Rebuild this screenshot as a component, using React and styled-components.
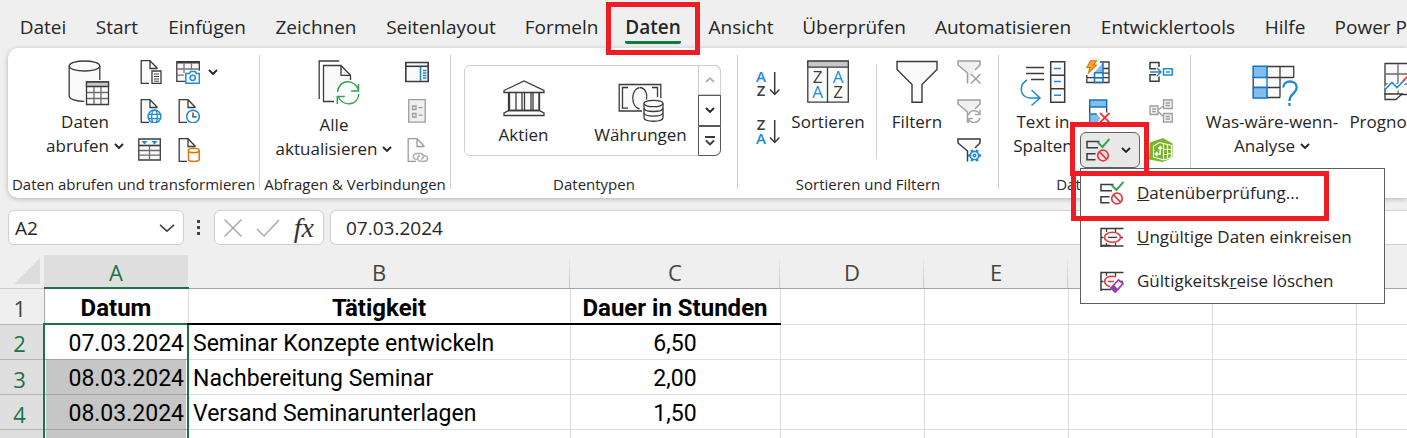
import React from "react";
import styled, { createGlobalStyle, css } from "styled-components";

const ui = `"Open Sans", "Noto Sans", sans-serif`;
const sheet = `Roboto, "Liberation Sans", sans-serif`;

const INK = "#3b3b3b";
const PALE = "#fafafa";
const BLUE = "#1e8bd4";
const GREEN = "#36a151";
const RED = "#e8383d";
const GREY = "#9d9d9d";
const ORANGE = "#e07408";

const GlobalStyle = createGlobalStyle`
  *, *::before, *::after {
    box-sizing: border-box;
  }
  body {
    margin: 0;
    background: #efefef;
    font-family: ${ui};
    color: #262626;
  }
  button {
    margin: 0;
    padding: 0;
    border: 0;
    background: none;
    font: inherit;
    color: inherit;
  }
`;

const Window = styled.div`
  display: flex;
  flex-direction: column;
  height: 100vh;
  overflow: hidden;
`;

/* tabs */

const TabBar = styled.nav`
  display: flex;
  flex: none;
  height: 48px;
  padding-left: 5px;
`;

const Tab = styled.button`
  position: relative;
  display: flex;
  flex: none;
  justify-content: center;
  width: ${(props) => props.$width}px;
  padding-top: 12px;
  font-size: 19px;
  line-height: 30px;
  white-space: nowrap;
  font-weight: ${(props) => (props.$active ? 600 : 400)};
`;

const TabText = styled.span`
  height: 32px;
  border-bottom: 3px solid ${(props) => (props.$active ? "#107c41" : "transparent")};
  border-radius: 2px;
`;

const Marker = styled.span`
  position: absolute;
  z-index: 5;
  top: ${(props) => props.$top}px;
  left: ${(props) => props.$left}px;
  width: ${(props) => props.$width}px;
  height: ${(props) => props.$height}px;
  border: 5px solid #ee1c24;
  pointer-events: none;
`;

/* ribbon */

const Ribbon = styled.section`
  display: flex;
  flex: none;
  min-height: 150px;
  margin-left: 8px;
  background: #fff;
  border-radius: 10px 0 0 10px;
  box-shadow: 0 1px 5px rgba(0, 0, 0, 0.25);
`;

const Separator = styled.div`
  flex: none;
  width: 1px;
  margin: ${(props) => (props.$inner ? "10px 0 15px" : "7px 0 9px")};
  background: #d0d0d0;
`;

const Group = styled.div`
  display: flex;
  flex-direction: column;
  flex: ${(props) => (props.$width ? "none" : "1")};
  width: ${(props) => (props.$width ? `${props.$width}px` : "auto")};
  min-width: 0;
  padding-top: 6px;
`;

const GroupBody = styled.div`
  display: flex;
  min-height: 120px;
  gap: ${(props) => props.$gap}px;
  padding-left: ${(props) => props.$indent}px;
`;

const GroupLabel = styled.div`
  font-size: 15px;
  line-height: 20px;
  text-align: center;
  white-space: nowrap;
`;

const BigButton = styled.button`
  flex: none;
  display: flex;
  flex-direction: column;
  align-items: center;
  align-self: flex-start;
  width: ${(props) => props.$width}px;
  padding-top: 6px;
  font-size: 17px;
  line-height: 24px;
  white-space: nowrap;
`;

const IconSlot = styled.span`
  display: flex;
  align-items: flex-start;
  height: ${(props) => props.$height || 50}px;
`;

const WithArrow = styled.span`
  display: flex;
  align-items: center;
  gap: 5px;
`;

const IconColumn = styled.div`
  flex: none;
  display: flex;
  flex-direction: column;
  align-items: flex-start;
  gap: 3px;
  padding-left: ${(props) => props.$indent || 0}px;
`;

const IconButton = styled.button`
  display: flex;
  align-items: center;
  gap: 8px;
  height: 36px;
`;

const SortColumn = styled.div`
  display: flex;
  flex-direction: column;
  gap: 12px;
  padding-top: 12px;
`;

const Glyph = styled.svg`
  display: block;
  flex: none;
  fill: none;
  stroke: ${INK};
  stroke-width: 1.3;
`;

/* data type gallery */

const Gallery = styled.div`
  display: flex;
  align-self: flex-start;
  height: 91px;
  margin-top: 11px;
  border: 1px solid #cfcfcf;
  border-radius: 6px;
`;

const GalleryItem = styled.button`
  display: flex;
  flex-direction: column;
  align-items: center;
  width: 117px;
  padding-top: 14px;
  font-size: 17px;
  line-height: 24px;
`;

const GallerySlot = styled.span`
  display: flex;
  height: 43px;
`;

const Scroller = styled.div`
  display: flex;
  flex-direction: column;
  width: 23px;
  margin: -1px;
`;

const ScrollButton = styled.button`
  display: flex;
  flex: 1;
  align-items: center;
  justify-content: center;
  border: 1px solid ${(props) => (props.disabled ? "#cfcfcf" : "#5a5a5a")};
  &:first-child {
    border-radius: 0 6px 0 0;
  }
  &:last-child {
    border-radius: 0 0 6px 0;
  }
`;

/* data validation split button and its menu */

const ValidationColumn = styled(IconColumn)`
  width: 60px;
  margin-left: -6px;
  margin-right: -3px;
`;

const Inset = styled.div`
  padding-left: 6px;
`;

const SplitButton = styled.div`
  position: relative;
  z-index: 3;
  width: 60px;
`;

const SplitFace = styled.button`
  display: flex;
  align-items: center;
  gap: 11px;
  width: 100%;
  height: 36px;
  padding-left: 5px;
  background: #e8e8e8;
  border: 1px solid #616161;
  border-radius: 6px;
`;

const Menu = styled.div`
  position: absolute;
  top: 36px;
  left: 0;
  width: 305px;
  padding: 2px 0 0;
  background: #fff;
  border: 1px solid #5c5f5c;
`;

const MenuItem = styled.button`
  position: relative;
  display: flex;
  align-items: center;
  gap: 13px;
  width: 100%;
  height: 44px;
  padding-left: 19px;
  font-size: 17px;
  line-height: 24px;
  white-space: nowrap;
`;

/* formula bar */

const box = css`
  background: #fff;
  border: 1px solid #cfcfcf;
  border-radius: 6px;
`;

const FormulaBar = styled.div`
  display: flex;
  flex: none;
  align-items: center;
  height: 35px;
  margin: 12px 0 10px 8px;
`;

const NameBox = styled.div`
  ${box}
  display: flex;
  align-items: center;
  width: 176px;
  height: 100%;
  padding-right: 8px;
`;

const NameInput = styled.input`
  flex: 1;
  min-width: 0;
  padding: 0 6px;
  border: 0;
  outline: 0;
  background: none;
  font-family: ${ui};
  font-size: 19px;
  color: #262626;
`;

const Dots = styled.span`
  display: flex;
  justify-content: center;
  width: 30px;
`;

const EntryButtons = styled.div`
  ${box}
  display: flex;
  align-items: center;
  width: 110px;
  height: 100%;
  padding: 0 8px;
  justify-content: space-between;
`;

const FxButton = styled.button`
  padding-right: 1px;
  font: italic 28px/30px "Liberation Serif", serif;
  color: #333;
`;

const FormulaInput = styled.input`
  ${box}
  flex: 1;
  min-width: 0;
  height: 100%;
  margin-left: 6px;
  padding: 0 15px;
  border-right: 0;
  border-radius: 6px 0 0 6px;
  font-family: ${ui};
  font-size: 19px;
  color: #262626;
  outline: 0;
`;

/* grid */

const SheetArea = styled.div`
  flex: 1;
  min-height: 0;
  overflow: hidden;
`;

const Grid = styled.table`
  width: 1644px;
  table-layout: fixed;
  border-collapse: collapse;
  font-family: ${sheet};
  font-size: 23px;
  line-height: 30px;
  color: #000;
`;

const ColHead = styled.th`
  height: 33px;
  padding: 2px 0 0;
  font-family: ${ui};
  font-size: 22px;
  font-weight: 400;
  color: ${(props) => (props.$selected ? "#1d7346" : "#444")};
  background: ${(props) =>
    props.$selected ? "#dfdfdf" : "linear-gradient(#efefef, #c4c4c4) right / 1px 100% no-repeat #efefef"};
  border-bottom: ${(props) => (props.$selected ? "2px solid #1d7346" : "1px solid #a6a6a6")};
`;

const Corner = styled.td`
  padding: 0 3px 0 0;
  border-bottom: 1px solid #c9c9c9;
`;

const RowHead = styled.th`
  height: ${(props) => (props.$selected ? 35 : 36)}px;
  padding: 3px 4px 0 0;
  font-family: ${ui};
  font-size: 22px;
  font-weight: 400;
  color: ${(props) => (props.$selected ? "#1d7346" : "#444")};
  background: ${(props) => (props.$selected ? "#dfdfdf" : "#efefef")};
  border-bottom: 1px solid #b5b5b5;
  border-right: 1px solid #a6a6a6;
`;

const Cell = styled.td`
  padding: ${(props) => (props.$align === "right" ? "4px 3px 0" : "4px 4px 0")};
  background: #fff;
  border-right: 1px solid #dcdcdc;
  border-bottom: 1px solid #dcdcdc;
  text-align: ${(props) => props.$align || "left"};
  white-space: nowrap;
  ${(props) =>
    props.$heading &&
    css`
      font-weight: 700;
      font-size: 24px;
      text-align: center;
    `}
  ${(props) =>
    props.$ruled &&
    css`
      border-bottom: 2px solid #000;
    `}
  ${(props) =>
    props.$picked &&
    css`
      background: ${props.$active ? "#fff" : "#c6c6c6"};
      border-left: 2px solid #1d7346;
      border-right: 2px solid #1d7346;
      border-bottom-color: #a3a3a3;
      box-shadow: inset 1px 0 #fff, inset -1px 0 #fff;
    `}
  ${(props) =>
    props.$active &&
    css`
      border-top: 2px solid #1d7346;
    `}
`;

/* icons */

const Icon = ({ w = 24, h = 24, children }) => (
  <Glyph width={w} height={h} viewBox={`0 0 ${w} ${h}`} aria-hidden="true">
    {children}
  </Glyph>
);

const Chevron = ({ size = 10, color = "#262626", up }) => (
  <Icon w={size} h={size}>
    <path
      stroke={color}
      strokeWidth={size > 12 ? 1.6 : 1.9}
      d={
        up
          ? `M1 ${size * 0.7}L${size / 2} ${size * 0.3}L${size - 1} ${size * 0.7}`
          : `M1 ${size * 0.3}L${size / 2} ${size * 0.7}L${size - 1} ${size * 0.3}`
      }
    />
  </Icon>
);

const DatabaseIcon = () => (
  <Icon w={50} h={46}>
    <g transform="translate(8 0)">
      <path fill={PALE} stroke="none" d="M1 6v31c3 4 12 5 17 4V21h14V6z" />
      <ellipse cx="16.5" cy="6" rx="15.3" ry="5" fill={PALE} />
      <path d="M1.2 6v30c0 3 7 5.300 15 5.300M31.800 6v14" />
      <path fill={PALE} d="M18.500 22h22v22.500h-22z" />
      <path fill="#c8c8c8" d="M18.500 22h22v4.500h-22z" />
      <path stroke="#6b6b6b" d="M19 32.500h21M19 38.500h21M26 27v17M33 27v17" />
    </g>
  </Icon>
);

const Page = ({ color = INK }) => (
  <>
    <path fill={PALE} stroke="none" d="M3 1h9l7 7v5l-8 10H3z" />
    <path stroke={color} d="M11 23.300H3.200V.7H12l7.500 7.800M12 .7v7.800h7.500" />
  </>
);

const TextFileIcon = () => (
  <Icon>
    <Page />
    <path fill="#fff" d="M14 11h9v12.300h-9z" />
    <path strokeWidth="1" d="M16 14h5M16 16.500h5M16 19h5M16 21.200h5" />
  </Icon>
);

const WebFileIcon = () => (
  <Icon>
    <Page />
    <circle cx="16.5" cy="17.5" r="6.400" fill="#fff" stroke={BLUE} strokeWidth="1.500" />
    <path stroke={BLUE} d="M10.500 15.400h12M10.500 19.600h12" />
    <ellipse cx="16.500" cy="17.500" rx="2.800" ry="6.400" stroke={BLUE} />
  </Icon>
);

const TableSourceIcon = () => (
  <Icon>
    <path fill={PALE} d="M.8 1h21.500v21H.8z" />
    <path d="M1 7.500h21" strokeWidth="1.600" />
    <path stroke="#6b6b6b" d="M1 12.500h21M1 17.200h21M11.500 8v14" />
    <path fill={BLUE} stroke="none" d="M3.500 3h6l-3 3.500zM13.500 3h6l-3 3.500z" />
  </Icon>
);

const PictureTableIcon = () => (
  <Icon>
    <path fill={PALE} stroke="none" d="M1 2h22v10l-14 9H1z" />
    <path d="M9 21.300H.8V1.700h22.500v9" />
    <path strokeWidth="2" d="M1 2.500h22" />
    <path stroke="#777" d="M1 9h22M1 15.200h7M8 3v10M15.500 3v7" />
    <path fill="#fff" stroke={BLUE} strokeWidth="1.500" d="M9.800 13.500h3.700l1.300-2h4.400l1.300 2h2.800v9.700H9.800z" />
    <circle cx="16.700" cy="17.800" r="2.600" stroke={BLUE} strokeWidth="1.500" />
  </Icon>
);

const RecentIcon = () => (
  <Icon>
    <Page />
    <circle cx="17" cy="17.500" r="6.300" fill="#fff" stroke={BLUE} strokeWidth="1.500" />
    <path d="M17 13.500v4.300h3.500" />
  </Icon>
);

const ExistingIcon = () => (
  <Icon>
    <Page />
    <path fill="#fff" stroke={ORANGE} strokeWidth="1.500" d="M12.500 12.500v9c0 1.200 2 1.900 5.300 1.900s5.400-.7 5.400-1.900v-9" />
    <ellipse cx="17.800" cy="12.500" rx="5.400" ry="2.200" fill="#fff" stroke={ORANGE} strokeWidth="1.500" />
  </Icon>
);

const RefreshAllIcon = () => (
  <Icon w={52} h={46}>
    <g transform="translate(10 0)">
      <path d="M1.200 39V1h20" />
      <path fill={PALE} stroke="none" d="M5 5h18l9 10v10l-14 16H5z" />
      <path d="M16 41.500H5.500V5.500H23l9.500 9.800V20M23 5.500v9.800h9.500" />
      <path
        stroke={GREEN}
        strokeWidth="1.500"
        d="M19.500 32c1-12 16-14.500 21-2M40.500 24v7h-7.500M40.800 34c-1 12-16 13.500-21 2M19.300 44v-7.500h7.500"
      />
    </g>
  </Icon>
);

const PaneIcon = () => (
  <Icon>
    <path fill={PALE} strokeWidth="1.600" d="M.8 2.500h22.400v19H.8z" />
    <path d="M1 6.300h22" strokeWidth="1.600" />
    <path stroke={BLUE} strokeWidth="1.600" d="M15.500 7v14" />
    <path stroke={BLUE} d="M18 10.500h3.500M18 13h3.500M18 15.500h3.500M18 18h3.500" />
  </Icon>
);

const PropertiesIcon = () => (
  <Icon>
    <path stroke={GREY} fill="#f0f0f0" d="M3.700.7h16.500v22.500H3.700z" />
    <path stroke={GREY} d="M7.500 7h3.500v3.500H7.500zM7.500 14.500h3.500V18H7.500zM13.500 8.700h4M13.500 16.200h4" />
  </Icon>
);

const LinksIcon = () => (
  <Icon>
    <Page color={GREY} />
    <path stroke="#fff" strokeWidth="4" d="M10 19h12" />
    <path stroke="#b0b0b0" strokeWidth="1.500" d="M12 21.500c-5 0-4.500-6 0-6h3c4 0 4.500 5 1 5.500M19 17.500c5 0 4.500 5.800 0 5.800h-3c-4 0-4.500-5-1-5.500" />
  </Icon>
);

const BankIcon = () => (
  <Icon w={42} h={37}>
    <path fill={PALE} d="M1 10.500L21 1l20 9.500v2H1zM5.500 12.500v18h31v-18" />
    <path d="M13 12.500v18M19 12.500v18M21.500 12.500v18M28 12.500v18M30 12.500v18M6.500 12.500v18M36 12.500v18M1 35.500v-2.500l5-2.500h30l5 2.500v2.500z" />
  </Icon>
);

const MoneyIcon = () => (
  <Icon w={46} h={42}>
    <path fill={PALE} stroke="none" d="M1 5h42v14L30 31H1z" />
    <path d="M24 31H1.200V4.500h41.600V18M10 7.500H4.500v20.700H10M34 7.500h5.500V17M21.500 7.500c-9 2-9 19 0 21.500M22 7.500c6 1 7.500 7 6.500 12" />
    <path fill={PALE} d="M26 23.500v14c0 5 19 5 19 0v-14" />
    <ellipse cx="35.500" cy="23.500" rx="9.500" ry="3.200" fill={PALE} />
    <path d="M26 28.500c1 4 18 4 19 0M26 33.200c1 4 18 4 19 0" />
  </Icon>
);

const Letter = ({ x, y, size = 15, children }) => (
  <text
    x={x}
    y={y}
    fontSize={size}
    fontWeight={size > 16 ? 400 : 600}
    fontFamily="Open Sans, sans-serif"
    textAnchor="middle"
    stroke="none"
    fill={children === "A" ? BLUE : INK}
  >
    {children}
  </text>
);

const SortIcon = ({ first, second }) => (
  <Icon w={24} h={26}>
    <Letter x={5} y={11}>{first}</Letter>
    <Letter x={5} y={25}>{second}</Letter>
    <path strokeWidth="1.500" d="M18.700 1v22.500M14 18.500l4.700 5 4.700-5" />
  </Icon>
);

const SortDialogIcon = () => (
  <Icon w={42} h={44}>
    <path fill={PALE} d="M.8 1.200h40.500v41H.8z" />
    <path fill="#c8c8c8" d="M.8 1.200h40.500v6H.8z" />
    <path d="M20.500 7.500v35" />
    <Letter x={10.500} y={23} size={17}>Z</Letter>
    <Letter x={10.500} y={38} size={17}>A</Letter>
    <Letter x={31} y={23} size={17}>A</Letter>
    <Letter x={31} y={38} size={17}>Z</Letter>
  </Icon>
);

const FilterIcon = () => (
  <Icon w={42} h={44}>
    <path fill={PALE} strokeWidth="1.400" d="M1 1.500h40v8L26 24.500v17.700H16V24.500L1 9.500z" />
  </Icon>
);

const SmallFunnel = ({ color, fill }) => (
  <path fill={fill} stroke={color} strokeWidth="1.500" d="M10.500 23.500V13L1 5V1h22v4l-5 5" />
);

const ClearFilterIcon = () => (
  <Icon>
    <SmallFunnel color={GREY} fill="#f0f0f0" />
    <path stroke={GREY} strokeWidth="1.500" d="M14 14l9.500 9.500M23.500 14L14 23.500" />
  </Icon>
);

const ReapplyIcon = () => (
  <Icon>
    <SmallFunnel color={GREY} fill="#f0f0f0" />
    <circle cx="17.500" cy="17.500" r="6.500" fill="#fff" stroke="none" />
    <path stroke="#a8a8a8" strokeWidth="1.500" d="M11.500 16.500c1-6 9-6.500 11.500-1M23 10.500v5h-5M23 19c-1.500 5.500-9 6-11.500 1M11.500 24v-4.500h4.500" />
  </Icon>
);

const AdvancedFilterIcon = () => (
  <Icon>
    <SmallFunnel color={INK} fill={PALE} />
    <circle cx="17.500" cy="17.500" r="6.200" fill="#fff" stroke="none" />
    <circle cx="17.500" cy="17.500" r="4.200" stroke={BLUE} strokeWidth="1.700" />
    <circle cx="17.500" cy="17.500" r="1.300" stroke={BLUE} strokeWidth="1.500" />
    <path
      stroke={BLUE}
      strokeWidth="2.400"
      d="M11 17.500h2.500M21.500 17.500h2.500M14.300 11.800l1.300 2.300M20.700 11.800l-1.300 2.300M14.300 23.200l1.300-2.300M20.700 23.200l-1.300-2.300"
    />
  </Icon>
);

const TextToColumnsIcon = () => (
  <Icon w={46} h={46}>
    <path strokeWidth="1.500" d="M6 7.500h18M6 13.500h18M11 19.500h13" />
    <path fill={PALE} strokeWidth="1.500" d="M30.700 1.700h14v40.500h-14zM30.700 15.200h14M30.700 28.700h14" />
    <path stroke={BLUE} strokeWidth="1.500" d="M34 8.500h7M34 21.500h7M34 35.200h7M7 20c-8 5-8 17 3 18h9M11.500 30l8.500 8-8.500 7.500" />
  </Icon>
);

const FlashFillIcon = () => (
  <Icon>
    <path fill={PALE} d="M14 2h9v20.500H.8V15" />
    <path fill="#83bdeb" stroke="none" d="M8 13l9-10.500V13z" />
    <path d="M1 17.700h22M17 8.500h6M17 13.200h6" />
    <path stroke="#1673c2" strokeWidth="1.500" d="M8 12.800h9.500M8.500 13v9.500H17M17 2v20.500M8.500 17.700H17" />
    <path fill="#f6a53d" stroke={ORANGE} strokeWidth="1.100" d="M4.500.7h6L7.500 5h3L2.500 13l1.500-5.500H.8z" />
  </Icon>
);

const RemoveDuplicatesIcon = () => (
  <Icon>
    <path fill="#83bdeb" stroke="#1673c2" strokeWidth="1.500" d="M3.700 1h17v7h-17z" />
    <path d="M3.700 8.500v6M20.700 8.500v5" />
    <path fill="#83bdeb" stroke="none" d="M3 15h8l3.500 4-3 5H3z" />
    <path stroke="#1673c2" d="M3.700 24v-9h7" />
    <path stroke={RED} strokeWidth="1.800" d="M14 14l9.500 9.500M23.500 14L14 23.500" />
  </Icon>
);

const ValidationIcon = () => (
  <Icon>
    <path strokeWidth="1.500" d="M13.500 3.500H1v6.300h11M9.500 15.800H1v6h8.500" />
    <path stroke={GREEN} strokeWidth="1.900" d="M11.500 4l5 5L23.500 1" />
    <circle cx="17" cy="17.500" r="5.300" stroke={RED} strokeWidth="1.700" />
    <path stroke={RED} strokeWidth="1.700" d="M13.200 13.700l7.600 7.600" />
  </Icon>
);

const ConsolidateIcon = () => (
  <Icon>
    <path strokeWidth="1.500" d="M10 7V2.500H1v6.300h6M10 16.500v4.700H1v-6.500h6" />
    <path stroke={BLUE} strokeWidth="1.500" d="M1 12h10.500M8 8l4 4-4 4M14.500 8.800h8.700v6.200h-8.700zM17 12h4" />
  </Icon>
);

const RelationsIcon = () => (
  <Icon>
    <path fill="#f2f2f2" stroke={GREY} d="M1 7h8v8.500H1zM14.500 1h8.700v8.500h-8.700zM14.500 14.500h8.700V23h-8.700z" />
    <path stroke={GREY} d="M9 11l5.500-4M9 12.500l5.500 5M3 10h4M3 12.700h4M16.500 4h4.500M16.500 6.500h4.500M16.500 17.500h4.500M16.500 20h4.500" />
  </Icon>
);

const DataModelIcon = () => (
  <Icon>
    <path fill="#78b52b" stroke="none" d="M1 4.500L14 0l9.500 5.500v14L14 24 0 21.500z" />
    <path stroke="#fff" strokeWidth="1.100" d="M4.500 19V8l6-3.500 12 3v12l-8 2.500zM14.500 6v16M14.500 11.500l8-.5M14.500 16.500l8-1M18.500 7v14" />
    <path stroke="#fff" strokeWidth="1.500" d="M11.200 9v7H6.500M9.300 10.700l1.900-2 1.900 2M8.300 14l-2 2 2 2" />
  </Icon>
);

const WhatIfIcon = () => (
  <Icon w={52} h={47}>
    <g transform="translate(6 0)">
      <path fill={PALE} d="M1 6.500h40.500V22l-10 15H1z" stroke="none" />
      <path d="M15 6.500h26.700V18M15 17.500h26M1 27.500h27M28 6.500v31M1.200 17v10M15 37.500h13" />
      <path fill="#83bdeb" stroke="#1673c2" strokeWidth="1.600" d="M1.200 6.300H15v11.200H1.200zM1.200 27.500H15v10.500H1.200z" />
      <path stroke="#1673c2" d="M15 17v11" />
      <path stroke={BLUE} strokeWidth="2.300" d="M31.300 27.500c0-8 13.400-8 13.400 0 0 6-7.200 6-7.200 13.500M37.500 43v3" />
    </g>
  </Icon>
);

const ForecastIcon = () => (
  <Icon w={42} h={46}>
    <path fill={PALE} d="M1 3.500h40v31H1z" />
    <path stroke="#6b6b6b" d="M1 14h40M1 24h40M14 4v30M27 4v30" />
    <path fill={PALE} d="M1 34h17l-6 5.500H1z" />
    <path stroke="#fff" strokeWidth="5" d="M2 29l6-6 5 5 7-7" />
    <path stroke={BLUE} strokeWidth="1.700" d="M1 29.500l7-7 5 5 8-8" />
    <path stroke={RED} strokeWidth="1.700" d="M19 21L31 9" />
  </Icon>
);

const InvalidCirclesIcon = ({ erase }) => (
  <Icon>
    <path strokeWidth="1.500" d="M1 22V3.500h22.500" />
    <path d="M1 12.500h2.500M1 20.500h10M20.500 12.500H23M6.500 4v3M15.500 4v3" />
    {erase ? (
      <>
        <path stroke={RED} strokeWidth="1.600" d="M16 7.700C9 6 4.500 9 4.700 12.500c.2 2.500 2.500 4.500 5.300 5M8 12.500h6" />
        <path fill="#fff" stroke="#9b3bb3" strokeWidth="1.700" d="M11 19l7.500-8 4.500 3.500-7.500 8.500z" />
        <path fill="#9b3bb3" stroke="#9b3bb3" d="M11 19l2.500-2.500 4 4L15 23z" />
      </>
    ) : (
      <>
        <path strokeWidth="1.500" d="M1 21h22.500" />
        <ellipse cx="12.500" cy="12.300" rx="8" ry="5" stroke={RED} strokeWidth="1.600" />
        <path d="M8 12.300h9M6.500 18v3M15.500 18v3" />
      </>
    )}
  </Icon>
);

const TABS = [
  ["Datei", 76],
  ["Start", 72],
  ["Einfügen", 108],
  ["Zeichnen", 110],
  ["Seitenlayout", 140],
  ["Formeln", 101],
  ["Daten", 82],
  ["Ansicht", 94],
  ["Überprüfen", 132],
  ["Automatisieren", 166],
  ["Entwicklertools", 164],
  ["Hilfe", 70],
  ["Power Pivot", 134],
];

const COLUMNS = ["A", "B", "C", "D", "E", "F", "G", "H", "I"];
const WIDTHS = [144, 382, 210, 144, 144, 144, 144, 144, 144];

const ROWS = [
  ["07.03.2024", "Seminar Konzepte entwickeln", "6,50"],
  ["08.03.2024", "Nachbereitung Seminar", "2,00"],
  ["08.03.2024", "Versand Seminarunterlagen", "1,50"],
  ["", "", ""],
];

const ValidationMenu = () => (
  <Menu role="menu">
    <MenuItem role="menuitem">
      <ValidationIcon />
      <span>
        <u>D</u>atenüberprüfung...
      </span>
      <Marker $top={0} $left={-10} $width={258} $height={50} />
    </MenuItem>
    <MenuItem role="menuitem">
      <InvalidCirclesIcon />
      <span>
        <u>U</u>ngültige Daten einkreisen
      </span>
    </MenuItem>
    <MenuItem role="menuitem">
      <InvalidCirclesIcon erase />
      <span>
        Gültigkeitsk<u>r</u>eise löschen
      </span>
    </MenuItem>
  </Menu>
);

const DataRibbon = () => (
  <Ribbon>
    <Group $width={251}>
      <GroupBody $indent={34} $gap={10}>
        <BigButton $width={86}>
          <IconSlot>
            <DatabaseIcon />
          </IconSlot>
          Daten
          <WithArrow>
            abrufen <Chevron />
          </WithArrow>
        </BigButton>
        <IconColumn>
          <IconButton aria-label="Aus Text/CSV"><TextFileIcon /></IconButton>
          <IconButton aria-label="Aus dem Web"><WebFileIcon /></IconButton>
          <IconButton aria-label="Aus Tabelle"><TableSourceIcon /></IconButton>
        </IconColumn>
        <IconColumn $indent={4}>
          <IconButton aria-label="Aus Bild">
            <PictureTableIcon />
            <Chevron />
          </IconButton>
          <IconButton aria-label="Zuletzt verwendete Quellen"><RecentIcon /></IconButton>
          <IconButton aria-label="Vorhandene Verbindungen"><ExistingIcon /></IconButton>
        </IconColumn>
      </GroupBody>
      <GroupLabel>Daten abrufen und transformieren</GroupLabel>
    </Group>
    <Separator />
    <Group $width={190}>
      <GroupBody $indent={15} $gap={12}>
        <BigButton $width={118}>
          <IconSlot $height={53}>
            <RefreshAllIcon />
          </IconSlot>
          Alle
          <WithArrow>
            aktualisieren <Chevron />
          </WithArrow>
        </BigButton>
        <IconColumn>
          <IconButton aria-label="Abfragen und Verbindungen"><PaneIcon /></IconButton>
          <IconButton aria-label="Eigenschaften" disabled><PropertiesIcon /></IconButton>
          <IconButton aria-label="Verknüpfungen" disabled><LinksIcon /></IconButton>
        </IconColumn>
      </GroupBody>
      <GroupLabel>Abfragen & Verbindungen</GroupLabel>
    </Group>
    <Separator />
    <Group $width={286}>
      <GroupBody $indent={13} $gap={0}>
        <Gallery>
          <GalleryItem>
            <GallerySlot><BankIcon /></GallerySlot>
            Aktien
          </GalleryItem>
          <GalleryItem>
            <GallerySlot><MoneyIcon /></GallerySlot>
            Währungen
          </GalleryItem>
          <Scroller>
            <ScrollButton aria-label="Nach oben" disabled><Chevron up color="#b5b5b5" /></ScrollButton>
            <ScrollButton aria-label="Nach unten"><Chevron /></ScrollButton>
            <ScrollButton aria-label="Weitere">
              <Icon w={10} h={10}>
                <path strokeWidth="1.900" d="M0 1h10M1 4.500l4 4 4-4" />
              </Icon>
            </ScrollButton>
          </Scroller>
        </Gallery>
      </GroupBody>
      <GroupLabel>Datentypen</GroupLabel>
    </Group>
    <Separator />
    <Group $width={260}>
      <GroupBody $indent={18} $gap={12}>
        <SortColumn>
          <IconButton aria-label="Aufsteigend sortieren"><SortIcon first="A" second="Z" /></IconButton>
          <IconButton aria-label="Absteigend sortieren"><SortIcon first="Z" second="A" /></IconButton>
        </SortColumn>
        <BigButton $width={72}>
          <IconSlot>
            <SortDialogIcon />
          </IconSlot>
          Sortieren
        </BigButton>
        <Separator $inner />
        <BigButton $width={56}>
          <IconSlot>
            <FilterIcon />
          </IconSlot>
          Filtern
        </BigButton>
        <IconColumn>
          <IconButton aria-label="Filter löschen" disabled><ClearFilterIcon /></IconButton>
          <IconButton aria-label="Erneut anwenden" disabled><ReapplyIcon /></IconButton>
          <IconButton aria-label="Erweitert"><AdvancedFilterIcon /></IconButton>
        </IconColumn>
      </GroupBody>
      <GroupLabel>Sortieren und Filtern</GroupLabel>
    </Group>
    <Separator />
    <Group $width={191}>
      <GroupBody $indent={13} $gap={12}>
        <BigButton $width={62}>
          <IconSlot>
            <TextToColumnsIcon />
          </IconSlot>
          <span>Text in</span>
          <span>Spalten</span>
        </BigButton>
        <ValidationColumn>
          <Inset>
            <IconButton aria-label="Blitzvorschau"><FlashFillIcon /></IconButton>
          </Inset>
          <Inset>
            <IconButton aria-label="Duplikate entfernen"><RemoveDuplicatesIcon /></IconButton>
          </Inset>
          <SplitButton>
            <SplitFace aria-label="Datenüberprüfung" aria-expanded="true">
              <ValidationIcon />
              <Chevron />
            </SplitFace>
            <ValidationMenu />
            <Marker $top={-10} $left={-10} $width={79} $height={54} />
          </SplitButton>
        </ValidationColumn>
        <IconColumn>
          <IconButton aria-label="Konsolidieren"><ConsolidateIcon /></IconButton>
          <IconButton aria-label="Beziehungen" disabled><RelationsIcon /></IconButton>
          <IconButton aria-label="Datenmodell verwalten"><DataModelIcon /></IconButton>
        </IconColumn>
      </GroupBody>
      <GroupLabel>Datentools</GroupLabel>
    </Group>
    <Separator />
    <Group>
      <GroupBody $indent={15} $gap={10}>
        <BigButton $width={132}>
          <IconSlot>
            <WhatIfIcon />
          </IconSlot>
          Was-wäre-wenn-
          <WithArrow>
            Analyse <Chevron />
          </WithArrow>
        </BigButton>
        <BigButton $width={114}>
          <IconSlot>
            <ForecastIcon />
          </IconSlot>
          Prognoseblatt
        </BigButton>
      </GroupBody>
    </Group>
  </Ribbon>
);

const Worksheet = () => (
  <SheetArea>
    <Grid>
      <colgroup>
        <col style={{ width: 44 }} />
        {WIDTHS.map((width, i) => (
          <col key={i} style={{ width }} />
        ))}
      </colgroup>
      <thead>
        <tr>
          <Corner>
            <Icon w={40} h={26}>
              <path fill="#dcdcdc" stroke="none" d="M40 0v26H14z" />
            </Icon>
          </Corner>
          {COLUMNS.map((name) => (
            <ColHead key={name} scope="col" $selected={name === "A"}>
              {name}
            </ColHead>
          ))}
        </tr>
      </thead>
      <tbody>
        <tr>
          <RowHead scope="row">1</RowHead>
          <Cell $heading>Datum</Cell>
          <Cell $heading $ruled>Tätigkeit</Cell>
          <Cell $heading $ruled>Dauer in Stunden</Cell>
          {COLUMNS.slice(3).map((name) => (
            <Cell key={name} />
          ))}
        </tr>
        {ROWS.map(([date, task, hours], i) => (
          <tr key={i}>
            <RowHead scope="row" $selected>{i + 2}</RowHead>
            <Cell $align="right" $picked $active={i === 0}>{date}</Cell>
            <Cell>{task}</Cell>
            <Cell $align="center">{hours}</Cell>
            {COLUMNS.slice(3).map((name) => (
              <Cell key={name} />
            ))}
          </tr>
        ))}
      </tbody>
    </Grid>
  </SheetArea>
);

const App = () => (
  <Window>
    <GlobalStyle />
    <TabBar>
      {TABS.map(([label, width]) => (
        <Tab key={label} $width={width} $active={label === "Daten"}>
          <TabText $active={label === "Daten"}>{label}</TabText>
          {label === "Daten" && <Marker $top={2} $left={-6} $width={94} $height={53} />}
        </Tab>
      ))}
    </TabBar>
    <DataRibbon />
    <FormulaBar>
      <NameBox>
        <NameInput aria-label="Namenfeld" defaultValue="A2" />
        <Chevron size={16} color="#444" />
      </NameBox>
      <Dots>
        <Icon w={4} h={16}>
          <path fill="#444" stroke="none" d="M0 0h3v3H0zM0 6h3v3H0zM0 12h3v3H0z" />
        </Icon>
      </Dots>
      <EntryButtons>
        <button aria-label="Abbrechen">
          <Icon w={20} h={20}>
            <path stroke="#a9a9a9" strokeWidth="1.500" d="M1.500 1.500l17 17M18.500 1.500l-17 17" />
          </Icon>
        </button>
        <button aria-label="Eingeben">
          <Icon w={24} h={20}>
            <path stroke="#a9a9a9" strokeWidth="1.500" d="M1 11l7 7L23 2" />
          </Icon>
        </button>
        <FxButton aria-label="Funktion einfügen">fx</FxButton>
      </EntryButtons>
      <FormulaInput aria-label="Bearbeitungsleiste" defaultValue="07.03.2024" />
    </FormulaBar>
    <Worksheet />
  </Window>
);

export default App;
